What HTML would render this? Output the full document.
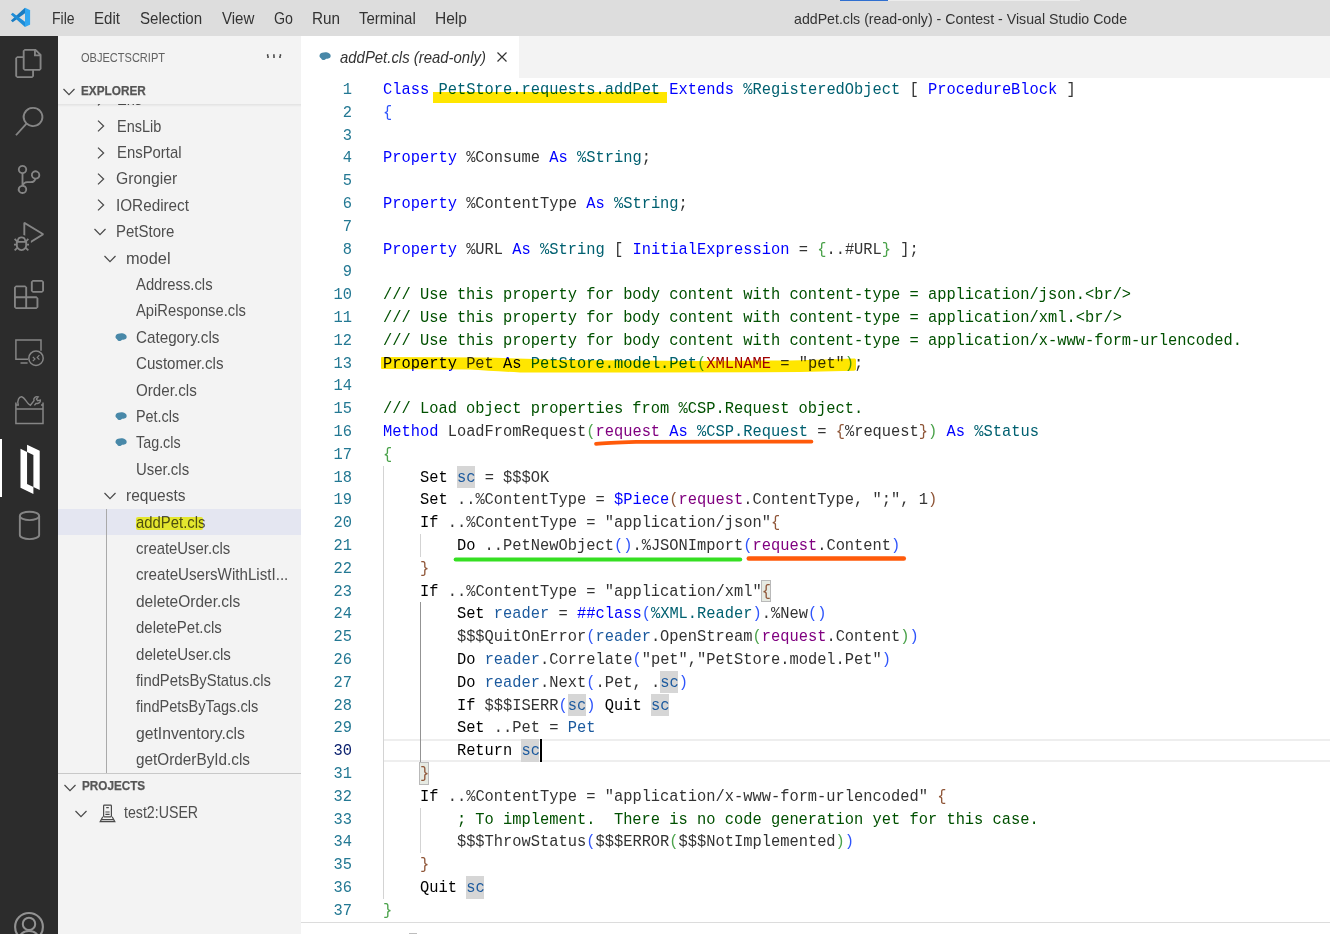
<!DOCTYPE html><html><head><meta charset="utf-8"><title>addPet.cls (read-only) - Contest - Visual Studio Code</title><style>
*{box-sizing:border-box;margin:0;padding:0}
html,body{width:1330px;height:934px;overflow:hidden;background:#fff}
body{position:relative;font-family:"Liberation Sans",sans-serif;color:#333}
.abs{position:absolute}
#title{left:0;top:0;width:1330px;height:36px;background:#dddddd}
#title .m{position:absolute;top:0;height:36px;line-height:36px;font-size:15px;color:#333;white-space:nowrap}
#wt{position:absolute;top:0;height:36px;line-height:37px;font-size:14.2px;color:#333;white-space:nowrap;left:793px}
#act{left:0;top:36px;width:58px;height:898px;background:#2c2c2c}
#side{left:58px;top:36px;width:243px;height:898px;background:#f3f3f3;overflow:hidden}
#ed{left:301px;top:36px;width:1029px;height:898px;background:#fff;overflow:hidden}
#tabs{left:0;top:0;width:1029px;height:42px;background:#f3f3f3}
#tab{left:0;top:0;width:218px;height:42px;background:#fff}
.row{position:absolute;left:0;width:243px;height:26.4px;line-height:26.4px;font-size:15px;color:#616161;white-space:nowrap}
.row span{position:absolute;top:0}
.hdr{position:absolute;left:0;width:243px;height:26.4px;line-height:26.4px;font-size:13.2px;font-weight:bold;color:#616161}
.ln{position:absolute;left:0;width:51px;text-align:right;height:22.8px;line-height:22.8px;color:#237893;transform:scaleY(1.09);transform-origin:0 5.4px}
.cl{position:absolute;left:82px;height:22.8px;line-height:22.8px;white-space:pre;color:#333;transform:scaleY(1.09);transform-origin:0 5.4px}
#code{font-family:"Liberation Mono",monospace;font-size:15.4px}
.k{color:#0000ff}.t{color:#006070}.d{color:#333}.c{color:#005000}.p{color:#800080}
.v{color:#1c5a9e}.b1{color:#2f55fb}.b2{color:#4aa24a}.b3{color:#8f5638}.r{color:#a00000}.bk{color:#000}
.hl{position:absolute;background:#d6d6d6}
svg{position:absolute;overflow:visible}
</style></head><body>
<div id="title" class="abs">
<svg style="left:0;top:0" width="40" height="36" viewBox="0 0 40 36"><path d="M10.9 20.6 L25 7.8 L25 13.3 L12.7 22.3 Z" fill="#1a7cc2"/><path d="M10.9 14.4 L12.7 12.7 L25 21.7 L25 27.1 Z" fill="#1e8dd8"/><path d="M25 7.8 L29.8 10.1 L30.1 10.6 L30.1 24.4 L29.8 24.8 L25 27.1 Z" fill="#30a6f1"/></svg>
<div id="m_File" class="abs" style="left:51.76px;top:-0.30px;height:36.00px;line-height:36.00px;font-size:16.20px;transform:scaleX(0.8663);transform-origin:0 0;white-space:nowrap;color:#333;">File</div>
<div id="m_Edit" class="abs" style="left:94.19px;top:-0.30px;height:36.00px;line-height:36.00px;font-size:16.20px;transform:scaleX(0.9314);transform-origin:0 0;white-space:nowrap;color:#333;">Edit</div>
<div id="m_Selection" class="abs" style="left:140.19px;top:-0.30px;height:36.00px;line-height:36.00px;font-size:16.20px;transform:scaleX(0.9334);transform-origin:0 0;white-space:nowrap;color:#333;">Selection</div>
<div id="m_View" class="abs" style="left:222.16px;top:-0.30px;height:36.00px;line-height:36.00px;font-size:16.20px;transform:scaleX(0.9306);transform-origin:0 0;white-space:nowrap;color:#333;">View</div>
<div id="m_Go" class="abs" style="left:274.16px;top:-0.30px;height:36.00px;line-height:36.00px;font-size:16.20px;transform:scaleX(0.8792);transform-origin:0 0;white-space:nowrap;color:#333;">Go</div>
<div id="m_Run" class="abs" style="left:312.32px;top:-0.30px;height:36.00px;line-height:36.00px;font-size:16.20px;transform:scaleX(0.9448);transform-origin:0 0;white-space:nowrap;color:#333;">Run</div>
<div id="m_Terminal" class="abs" style="left:359.37px;top:-0.30px;height:36.00px;line-height:36.00px;font-size:16.20px;transform:scaleX(0.9279);transform-origin:0 0;white-space:nowrap;color:#333;">Terminal</div>
<div id="m_Help" class="abs" style="left:435.37px;top:-0.30px;height:36.00px;line-height:36.00px;font-size:16.20px;transform:scaleX(0.9604);transform-origin:0 0;white-space:nowrap;color:#333;">Help</div>
<div id="wt" class="abs" style="left:793.69px;top:0.50px;height:36.00px;line-height:36.00px;font-size:15.00px;transform:scaleX(0.9450);transform-origin:0 0;white-space:nowrap;color:#333;">addPet.cls (read-only) - Contest - Visual Studio Code</div>
<div class="abs" style="left:840px;top:0;width:48px;height:1px;background:#2f6fd0"></div>
<div class="abs" style="left:888px;top:0;width:192px;height:1px;background:#ececec"></div>
</div>
<div id="act" class="abs">
<svg style="left:14.0px;top:13.3px" width="30" height="29" viewBox="0 0 24 24" preserveAspectRatio="none" fill="#858585"><path d="M17.5 0h-9L7 1.5V6H2.5L1 7.5v15.07L2.5 24h12.07L16 22.57V18h4.7l1.3-1.43V4.5L17.5 0zm0 2.12l2.38 2.38H17.5V2.12zm-3 20.38h-12v-15H7v9.07L8.5 18h6v4.5zm6-6h-12v-15H16V6h4.5v10.5z"/></svg>
<svg style="left:14.0px;top:70.9px" width="30" height="29" viewBox="0 0 24 24" preserveAspectRatio="none" fill="#858585"><path d="M15.25 0a8.25 8.25 0 0 0-6.18 13.72L1 22.88l1.12 1 8.05-9.12A8.251 8.251 0 1 0 15.25.01V0zm0 15a6.75 6.75 0 1 1 0-13.5 6.75 6.75 0 0 1 0 13.5z"/></svg>
<svg style="left:14.0px;top:128.5px" width="30" height="29" viewBox="0 0 24 24" preserveAspectRatio="none" fill="#858585"><path d="M21.007 8.222A3.738 3.738 0 0 0 15.045 5.2a3.737 3.737 0 0 0 1.156 6.583 2.988 2.988 0 0 1-2.668 1.67h-2.99a4.456 4.456 0 0 0-2.989 1.165V7.4a3.737 3.737 0 1 0-1.494 0v9.117a3.776 3.776 0 1 0 1.816.099 2.99 2.99 0 0 1 2.668-1.667h2.99a4.484 4.484 0 0 0 4.223-3.039 3.736 3.736 0 0 0 3.25-3.687zM4.565 3.738a2.242 2.242 0 1 1 4.484 0 2.242 2.242 0 0 1-4.484 0zm4.484 16.441a2.242 2.242 0 1 1-4.484 0 2.242 2.242 0 0 1 4.484 0zm8.221-9.715a2.242 2.242 0 1 1 0-4.485 2.242 2.242 0 0 1 0 4.485z"/></svg>
<svg style="left:14.0px;top:186.1px" width="30" height="29" viewBox="0 0 24 24" preserveAspectRatio="none" fill="#858585"><path d="M10.94 13.5l-1.32 1.32a3.73 3.73 0 0 0-7.24 0L1.06 13.5 0 14.56l1.72 1.72-.22.22V18H0v1.5h1.5v.08c.077.489.214.966.41 1.42L0 22.94 1.06 24l1.65-1.65A4.308 4.308 0 0 0 6 24a4.31 4.31 0 0 0 3.29-1.65L10.94 24 12 22.94 10.09 21c.198-.464.336-.951.41-1.45v-.1H12V18h-1.5v-1.5l-.22-.22L12 14.56l-1.06-1.06zM6 13.5a2.25 2.25 0 0 1 2.25 2.25h-4.5A2.25 2.25 0 0 1 6 13.5zm3 6a3.33 3.33 0 0 1-3 3 3.33 3.33 0 0 1-3-3v-2.25h6v2.25zm14.76-9.9v1.26L13.5 17.37V15.6l8.5-5.37L9 2v9.46a5.07 5.07 0 0 0-1.5-.72V.63L8.64 0l15.12 9.6z"/></svg>
<svg style="left:14.0px;top:243.7px" width="30" height="29" viewBox="0 0 24 24" preserveAspectRatio="none" fill="#858585"><path d="M13.5 1.5L15 0h7.5L24 1.5V9l-1.5 1.5H15L13.5 9V1.5zm1.5 0V9h7.5V1.5H15zM0 15V6l1.5-1.5H9L10.5 6v7.5H18l1.5 1.5v7.5L18 24H1.5L0 22.5V15zm9-1.5V6H1.5v7.5H9zM9 15H1.5v7.5H9V15zm1.5 7.5H18V15h-7.5v7.5z"/></svg>
<svg style="left:0;top:0" width="58" height="898" viewBox="0 36 58 898"><g fill="none" stroke="#858585" stroke-width="1.5"><path d="M28 359.2 H15.9 V340 H41 V350.8"/><path d="M20.5 363 H27.6"/><circle cx="36" cy="358.2" r="7.2"/><path d="M32.8 356.8 L35 359 L32.8 361.2 M39.4 355.2 L37.2 357.4 L39.4 359.6" stroke-width="1.2"/><path d="M15.9 402.5 V423.4 H43 V402.5 M15.9 408.9 H43 M16.5 405 H19 M41 405 H42.5"/><path d="M18.2 404.6 C17 400.5 19 396.6 21.6 396.8 C24.2 397.4 26 401.2 28.6 404 L30.4 405.2 L34 400.6 C33 398 35.6 396 38.2 396.9 L36.4 399.1 L37.7 400.7 L40.4 400.1 C40.7 402.6 38.1 404.1 36.1 403.3 L34.4 405.4" stroke-width="1.4"/></g></svg>
<svg style="left:0;top:0" width="58" height="898" viewBox="0 36 58 898"><g fill="#fff"><path d="M20.5 448.7 L27.05 451.9 L27.05 483.9 L33.4 487 L33.4 494.1 L20.5 487.7 Z"/><path d="M27.05 444.8 L39.7 450.7 L39.7 490.1 L33.4 487 L33.4 455 L27.05 451.9 Z"/></g></svg>
<svg style="left:0;top:0" width="58" height="898" viewBox="0 36 58 898"><g fill="none" stroke="#858585" stroke-width="1.9"><ellipse cx="29.5" cy="515.9" rx="9.65" ry="4.2"/><path d="M19.85 515.9 V534.9 A9.65 4.2 0 0 0 39.15 534.9 V515.9"/></g></svg>
<svg style="left:0;top:0" width="58" height="898" viewBox="0 36 58 898"><g fill="none" stroke="#929292" stroke-width="2.1"><circle cx="29" cy="926.9" r="13.9"/><circle cx="29" cy="923.9" r="6.2" stroke-width="2"/><path d="M19.4 937.5 C21 932.3 25 931.1 29 931.1 C33 931.1 37 932.3 38.6 937.5" stroke-width="2"/></g></svg>
<div class="abs" style="left:0;top:403.2px;width:2.4px;height:57.6px;background:#fff"></div>
</div>
<div id="side" class="abs">
<div id="sb_title" class="abs" style="left:23.37px;top:0.80px;height:42.00px;line-height:42.00px;font-size:13.00px;transform:scaleX(0.8489);transform-origin:0 0;white-space:nowrap;color:#616161;">OBJECTSCRIPT</div>
<div class="abs" style="left:207px;top:11px;font-size:16px;letter-spacing:1px;color:#424242;line-height:16px">···</div>
<div class="abs" style="left:0;top:68.4px;width:243px;height:668.6px;overflow:hidden">
<svg style="left:39.2px;top:-10.6px" width="8" height="12" viewBox="0 0 8 12"><path d="M1 0.6 L6.6 6 L1 11.4" fill="none" stroke="#4a4a4a" stroke-width="1.25"/></svg>
<div id="r0" class="abs" style="left:58.80px;top:-18.90px;height:26.40px;line-height:26.40px;font-size:16.20px;transform:scaleX(0.9000);transform-origin:0 0;white-space:nowrap;color:#4e4e4e;">Ens</div>
<svg style="left:39.2px;top:15.8px" width="8" height="12" viewBox="0 0 8 12"><path d="M1 0.6 L6.6 6 L1 11.4" fill="none" stroke="#4a4a4a" stroke-width="1.25"/></svg>
<div id="r1" class="abs" style="left:58.58px;top:8.30px;height:26.40px;line-height:26.40px;font-size:16.20px;transform:scaleX(0.8937);transform-origin:0 0;white-space:nowrap;color:#4e4e4e;">EnsLib</div>
<svg style="left:39.2px;top:42.2px" width="8" height="12" viewBox="0 0 8 12"><path d="M1 0.6 L6.6 6 L1 11.4" fill="none" stroke="#4a4a4a" stroke-width="1.25"/></svg>
<div id="r2" class="abs" style="left:58.55px;top:34.70px;height:26.40px;line-height:26.40px;font-size:16.20px;transform:scaleX(0.9196);transform-origin:0 0;white-space:nowrap;color:#4e4e4e;">EnsPortal</div>
<svg style="left:39.2px;top:68.6px" width="8" height="12" viewBox="0 0 8 12"><path d="M1 0.6 L6.6 6 L1 11.4" fill="none" stroke="#4a4a4a" stroke-width="1.25"/></svg>
<div id="r3" class="abs" style="left:58.44px;top:61.10px;height:26.40px;line-height:26.40px;font-size:16.20px;transform:scaleX(0.9723);transform-origin:0 0;white-space:nowrap;color:#4e4e4e;">Grongier</div>
<svg style="left:39.2px;top:95.0px" width="8" height="12" viewBox="0 0 8 12"><path d="M1 0.6 L6.6 6 L1 11.4" fill="none" stroke="#4a4a4a" stroke-width="1.25"/></svg>
<div id="r4" class="abs" style="left:57.95px;top:87.50px;height:26.40px;line-height:26.40px;font-size:16.20px;transform:scaleX(0.9434);transform-origin:0 0;white-space:nowrap;color:#4e4e4e;">IORedirect</div>
<svg style="left:36.2px;top:124.0px" width="12" height="8" viewBox="0 0 12 8"><path d="M0.5 1 L6 6.6 L11.5 1" fill="none" stroke="#4a4a4a" stroke-width="1.25"/></svg>
<div id="r5" class="abs" style="left:57.95px;top:113.90px;height:26.40px;line-height:26.40px;font-size:16.20px;transform:scaleX(0.9256);transform-origin:0 0;white-space:nowrap;color:#4e4e4e;">PetStore</div>
<svg style="left:45.5px;top:150.4px" width="12" height="8" viewBox="0 0 12 8"><path d="M0.5 1 L6 6.6 L11.5 1" fill="none" stroke="#4a4a4a" stroke-width="1.25"/></svg>
<div id="r6" class="abs" style="left:68.16px;top:140.30px;height:26.40px;line-height:26.40px;font-size:16.20px;transform:scaleX(1.0104);transform-origin:0 0;white-space:nowrap;color:#4e4e4e;">model</div>
<div id="r7" class="abs" style="left:78.46px;top:166.70px;height:26.40px;line-height:26.40px;font-size:16.20px;transform:scaleX(0.9150);transform-origin:0 0;white-space:nowrap;color:#4e4e4e;">Address.cls</div>
<div id="r8" class="abs" style="left:78.46px;top:193.10px;height:26.40px;line-height:26.40px;font-size:16.20px;transform:scaleX(0.9105);transform-origin:0 0;white-space:nowrap;color:#4e4e4e;">ApiResponse.cls</div>
<svg style="left:57.0px;top:228.2px" width="12.2" height="9" viewBox="0 0 13 10"><path d="M0.3 4 C0.6 1.4 3 0.2 5.5 0.5 C8.5 0 12.7 1.2 12.7 4.4 C12.7 7 9.5 7.6 7.6 7.6 C6 9.6 2.6 9.4 2 7 C0.8 6.4 0.1 5.4 0.3 4 Z" fill="#4888a8"/></svg>
<div id="r9" class="abs" style="left:77.96px;top:219.50px;height:26.40px;line-height:26.40px;font-size:16.20px;transform:scaleX(0.9399);transform-origin:0 0;white-space:nowrap;color:#4e4e4e;">Category.cls</div>
<div id="r10" class="abs" style="left:77.96px;top:245.90px;height:26.40px;line-height:26.40px;font-size:16.20px;transform:scaleX(0.9348);transform-origin:0 0;white-space:nowrap;color:#4e4e4e;">Customer.cls</div>
<div id="r11" class="abs" style="left:77.96px;top:272.30px;height:26.40px;line-height:26.40px;font-size:16.20px;transform:scaleX(0.9375);transform-origin:0 0;white-space:nowrap;color:#4e4e4e;">Order.cls</div>
<svg style="left:57.0px;top:307.4px" width="12.2" height="9" viewBox="0 0 13 10"><path d="M0.3 4 C0.6 1.4 3 0.2 5.5 0.5 C8.5 0 12.7 1.2 12.7 4.4 C12.7 7 9.5 7.6 7.6 7.6 C6 9.6 2.6 9.4 2 7 C0.8 6.4 0.1 5.4 0.3 4 Z" fill="#4888a8"/></svg>
<div id="r12" class="abs" style="left:78.15px;top:298.70px;height:26.40px;line-height:26.40px;font-size:16.20px;transform:scaleX(0.8898);transform-origin:0 0;white-space:nowrap;color:#4e4e4e;">Pet.cls</div>
<svg style="left:57.0px;top:333.8px" width="12.2" height="9" viewBox="0 0 13 10"><path d="M0.3 4 C0.6 1.4 3 0.2 5.5 0.5 C8.5 0 12.7 1.2 12.7 4.4 C12.7 7 9.5 7.6 7.6 7.6 C6 9.6 2.6 9.4 2 7 C0.8 6.4 0.1 5.4 0.3 4 Z" fill="#4888a8"/></svg>
<div id="r13" class="abs" style="left:77.98px;top:325.10px;height:26.40px;line-height:26.40px;font-size:16.20px;transform:scaleX(0.8861);transform-origin:0 0;white-space:nowrap;color:#4e4e4e;">Tag.cls</div>
<div id="r14" class="abs" style="left:78.15px;top:351.50px;height:26.40px;line-height:26.40px;font-size:16.20px;transform:scaleX(0.9223);transform-origin:0 0;white-space:nowrap;color:#4e4e4e;">User.cls</div>
<svg style="left:45.5px;top:388.0px" width="12" height="8" viewBox="0 0 12 8"><path d="M0.5 1 L6 6.6 L11.5 1" fill="none" stroke="#4a4a4a" stroke-width="1.25"/></svg>
<div id="r15" class="abs" style="left:68.12px;top:377.90px;height:26.40px;line-height:26.40px;font-size:16.20px;transform:scaleX(0.9574);transform-origin:0 0;white-space:nowrap;color:#4e4e4e;">requests</div>
<div class="abs" style="left:0;top:404.4px;width:243px;height:26.4px;background:#e4e6f1"></div>
<div id="r16" class="abs" style="left:77.96px;top:404.30px;height:26.40px;line-height:26.40px;font-size:16.20px;transform:scaleX(0.9190);transform-origin:0 0;white-space:nowrap;color:#4e4e4e;">addPet.cls</div>
<div id="r17" class="abs" style="left:77.96px;top:430.70px;height:26.40px;line-height:26.40px;font-size:16.20px;transform:scaleX(0.9193);transform-origin:0 0;white-space:nowrap;color:#4e4e4e;">createUser.cls</div>
<div id="r18" class="abs" style="left:77.95px;top:457.10px;height:26.40px;line-height:26.40px;font-size:16.20px;transform:scaleX(0.9354);transform-origin:0 0;white-space:nowrap;color:#4e4e4e;">createUsersWithListI...</div>
<div id="r19" class="abs" style="left:77.96px;top:483.50px;height:26.40px;line-height:26.40px;font-size:16.20px;transform:scaleX(0.9573);transform-origin:0 0;white-space:nowrap;color:#4e4e4e;">deleteOrder.cls</div>
<div id="r20" class="abs" style="left:77.96px;top:509.90px;height:26.40px;line-height:26.40px;font-size:16.20px;transform:scaleX(0.9254);transform-origin:0 0;white-space:nowrap;color:#4e4e4e;">deletePet.cls</div>
<div id="r21" class="abs" style="left:77.96px;top:536.30px;height:26.40px;line-height:26.40px;font-size:16.20px;transform:scaleX(0.9335);transform-origin:0 0;white-space:nowrap;color:#4e4e4e;">deleteUser.cls</div>
<div id="r22" class="abs" style="left:77.94px;top:562.70px;height:26.40px;line-height:26.40px;font-size:16.20px;transform:scaleX(0.9144);transform-origin:0 0;white-space:nowrap;color:#4e4e4e;">findPetsByStatus.cls</div>
<div id="r23" class="abs" style="left:77.96px;top:589.10px;height:26.40px;line-height:26.40px;font-size:16.20px;transform:scaleX(0.8997);transform-origin:0 0;white-space:nowrap;color:#4e4e4e;">findPetsByTags.cls</div>
<div id="r24" class="abs" style="left:77.96px;top:615.50px;height:26.40px;line-height:26.40px;font-size:16.20px;transform:scaleX(0.9716);transform-origin:0 0;white-space:nowrap;color:#4e4e4e;">getInventory.cls</div>
<div id="r25" class="abs" style="left:77.96px;top:641.90px;height:26.40px;line-height:26.40px;font-size:16.20px;transform:scaleX(0.9458);transform-origin:0 0;white-space:nowrap;color:#4e4e4e;">getOrderById.cls</div>
<div class="abs" style="left:48px;top:404.4px;width:1px;height:265px;background:#a9a9a9"></div>
<div class="abs" style="left:78.4px;top:412.4px;width:67px;height:13.4px;background:#ffff30;mix-blend-mode:multiply;border-radius:2px"></div>
</div>
<div class="abs" style="left:0;top:42px;width:243px;height:26.2px;background:#f3f3f3"></div>
<div class="abs" style="left:0;top:67.8px;width:243px;height:3.4px;background:linear-gradient(rgba(0,0,0,0.075),rgba(0,0,0,0))"></div>
<svg style="left:5.3px;top:52.2px" width="12" height="8" viewBox="0 0 12 8"><path d="M0.5 1 L6 6.6 L11.5 1" fill="none" stroke="#4a4a4a" stroke-width="1.25"/></svg>
<div id="h_exp" class="abs" style="left:23.36px;top:42.20px;height:26.40px;line-height:26.40px;font-size:12.80px;transform:scaleX(0.9203);transform-origin:0 0;white-space:nowrap;font-weight:bold;-webkit-text-stroke:0.25px;color:#555;">EXPLORER</div>
<div class="abs" style="left:208.7px;top:19.6px;width:2px;height:2px;border-radius:1px;background:#3c3c3c"></div>
<div class="abs" style="left:214.5px;top:19.6px;width:2px;height:2px;border-radius:1px;background:#3c3c3c"></div>
<div class="abs" style="left:220.5px;top:19.6px;width:2px;height:2px;border-radius:1px;background:#3c3c3c"></div>
<div class="abs" style="left:0;top:737px;width:243px;height:1px;background:#c8c8c8"></div>
<svg style="left:5.5px;top:747.6px" width="12" height="8" viewBox="0 0 12 8"><path d="M0.5 1 L6 6.6 L11.5 1" fill="none" stroke="#4a4a4a" stroke-width="1.25"/></svg>
<div id="h_prj" class="abs" style="left:23.78px;top:737.40px;height:26.40px;line-height:26.40px;font-size:12.80px;transform:scaleX(0.9161);transform-origin:0 0;white-space:nowrap;font-weight:bold;-webkit-text-stroke:0.25px;color:#555;">PROJECTS</div>
<svg style="left:17.2px;top:774.0px" width="12" height="8" viewBox="0 0 12 8"><path d="M0.5 1 L6 6.6 L11.5 1" fill="none" stroke="#4a4a4a" stroke-width="1.25"/></svg>
<svg style="left:40.5px;top:767.5px" width="18" height="19" viewBox="0 0 18 19"><g fill="none" stroke="#4a4a4a" stroke-width="1.2"><rect x="4.6" y="1.2" width="7.8" height="11.6" rx="0.8"/><path d="M3.8 12.8 L1.2 17.6 L15.8 17.6 L13.2 12.8"/><path d="M6.4 8 H10.6 M6.4 10.4 H10.6 M7.2 3.6 H9.8 M2.2 15.6 H14.8"/></g></svg>
<div id="r_prj" class="abs" style="left:65.95px;top:763.00px;height:26.40px;line-height:26.40px;font-size:16.20px;transform:scaleX(0.8761);transform-origin:0 0;white-space:nowrap;color:#4e4e4e;">test2:USER</div>
</div>
<div id="ed" class="abs">
<div id="tabs" class="abs"><div id="tab" class="abs">
<svg style="left:18.3px;top:16.2px" width="12.2" height="9" viewBox="0 0 13 10"><path d="M0.3 4 C0.6 1.4 3 0.2 5.5 0.5 C8.5 0 12.7 1.2 12.7 4.4 C12.7 7 9.5 7.6 7.6 7.6 C6 9.6 2.6 9.4 2 7 C0.8 6.4 0.1 5.4 0.3 4 Z" fill="#4888a8"/></svg>
<div id="tabt" class="abs" style="left:39.19px;top:-0.10px;height:42.00px;line-height:42.00px;font-size:16.20px;transform:scaleX(0.9213);transform-origin:0 0;white-space:nowrap;font-style:italic;color:#333;">addPet.cls (read-only)</div>
<svg style="left:196px;top:15.6px" width="10" height="10" viewBox="0 0 10 10"><path d="M0.5 0.5 L9.5 9.5 M9.5 0.5 L0.5 9.5" stroke="#333" stroke-width="1.2" fill="none"/></svg>
</div></div>
<div id="code" class="abs" style="left:0;top:0;width:1029px;height:898px">
<div class="abs" style="left:82px;top:703.2px;width:947px;height:22.8px;border-top:2px solid #eee;border-bottom:2px solid #eee"></div>
<div class="hl" style="left:155.6px;top:429.7px;width:18.2px;height:22.6px"></div>
<div class="hl" style="left:358.9px;top:634.9px;width:18.2px;height:22.6px"></div>
<div class="hl" style="left:266.5px;top:657.7px;width:18.2px;height:22.6px"></div>
<div class="hl" style="left:349.7px;top:657.7px;width:18.2px;height:22.6px"></div>
<div class="hl" style="left:220.3px;top:703.3px;width:18.2px;height:22.6px"></div>
<div class="hl" style="left:164.9px;top:840.1px;width:18.2px;height:22.6px"></div>
<div class="abs" style="left:460.2px;top:543.8px;width:10.1px;height:22.5px;background:#e6eae2;border:1px solid #b9b9b9"></div>
<div class="abs" style="left:118.4px;top:726.2px;width:10.1px;height:22.5px;background:#e6eae2;border:1px solid #b9b9b9"></div>
<div class="abs" style="left:82px;top:429.6px;width:1px;height:433.2px;background:#d3d3d3"></div>
<div class="abs" style="left:119px;top:498.0px;width:1px;height:22.8px;background:#d3d3d3"></div>
<div class="abs" style="left:119px;top:566.4px;width:1px;height:159.6px;background:#939393"></div>
<div class="abs" style="left:119px;top:771.6px;width:1px;height:45.6px;background:#d3d3d3"></div>
<div class="ln" style="top:42.0px">1</div>
<div class="cl" style="top:42.0px"><span class="k">Class</span> <span class="t">PetStore.requests.addPet</span> <span class="k">Extends</span> <span class="t">%RegisteredObject</span><span class="d"> [ </span><span class="k">ProcedureBlock</span><span class="d"> ]</span></div>
<div class="ln" style="top:64.8px">2</div>
<div class="cl" style="top:64.8px"><span class="b1">{</span></div>
<div class="ln" style="top:87.6px">3</div>
<div class="ln" style="top:110.4px">4</div>
<div class="cl" style="top:110.4px"><span class="k">Property</span><span class="d"> %Consume </span><span class="k">As</span> <span class="t">%String</span><span class="d">;</span></div>
<div class="ln" style="top:133.2px">5</div>
<div class="ln" style="top:156.0px">6</div>
<div class="cl" style="top:156.0px"><span class="k">Property</span><span class="d"> %ContentType </span><span class="k">As</span> <span class="t">%String</span><span class="d">;</span></div>
<div class="ln" style="top:178.8px">7</div>
<div class="ln" style="top:201.6px">8</div>
<div class="cl" style="top:201.6px"><span class="k">Property</span><span class="d"> %URL </span><span class="k">As</span> <span class="t">%String</span><span class="d"> [ </span><span class="k">InitialExpression</span><span class="d"> = </span><span class="b2">{</span><span class="d">..#URL</span><span class="b2">}</span><span class="d"> ];</span></div>
<div class="ln" style="top:224.4px">9</div>
<div class="ln" style="top:247.2px">10</div>
<div class="cl" style="top:247.2px"><span class="c">/// Use this property for body content with content-type = application/json.&lt;br/&gt;</span></div>
<div class="ln" style="top:270.0px">11</div>
<div class="cl" style="top:270.0px"><span class="c">/// Use this property for body content with content-type = application/xml.&lt;br/&gt;</span></div>
<div class="ln" style="top:292.8px">12</div>
<div class="cl" style="top:292.8px"><span class="c">/// Use this property for body content with content-type = application/x-www-form-urlencoded.</span></div>
<div class="ln" style="top:315.6px">13</div>
<div class="cl" style="top:315.6px"><span class="k">Property</span><span class="d"> Pet </span><span class="k">As</span> <span class="t">PetStore.model.Pet</span><span class="b2">(</span><span class="r">XMLNAME</span><span class="d"> = &quot;pet&quot;</span><span class="b2">)</span><span class="d">;</span></div>
<div class="ln" style="top:338.4px">14</div>
<div class="ln" style="top:361.2px">15</div>
<div class="cl" style="top:361.2px"><span class="c">/// Load object properties from %CSP.Request object.</span></div>
<div class="ln" style="top:384.0px">16</div>
<div class="cl" style="top:384.0px"><span class="k">Method</span><span class="d"> LoadFromRequest</span><span class="b2">(</span><span class="p">request</span> <span class="k">As</span> <span class="t">%CSP.Request</span><span class="d"> = </span><span class="b3">{</span><span class="d">%request</span><span class="b3">}</span><span class="b2">)</span> <span class="k">As</span> <span class="t">%Status</span></div>
<div class="ln" style="top:406.8px">17</div>
<div class="cl" style="top:406.8px"><span class="b2">{</span></div>
<div class="ln" style="top:429.6px">18</div>
<div class="cl" style="top:429.6px">    <span class="bk">Set</span> <span class="v">sc</span><span class="d"> = $$$OK</span></div>
<div class="ln" style="top:452.4px">19</div>
<div class="cl" style="top:452.4px">    <span class="bk">Set</span><span class="d"> ..%ContentType = </span><span class="k">$Piece</span><span class="b3">(</span><span class="p">request</span><span class="d">.ContentType, &quot;;&quot;, 1</span><span class="b3">)</span></div>
<div class="ln" style="top:475.2px">20</div>
<div class="cl" style="top:475.2px">    <span class="bk">If</span><span class="d"> ..%ContentType = &quot;application/json&quot;</span><span class="b3">{</span></div>
<div class="ln" style="top:498.0px">21</div>
<div class="cl" style="top:498.0px">        <span class="bk">Do</span><span class="d"> ..PetNewObject</span><span class="b1">()</span><span class="d">.%JSONImport</span><span class="b1">(</span><span class="p">request</span><span class="d">.Content</span><span class="b1">)</span></div>
<div class="ln" style="top:520.8px">22</div>
<div class="cl" style="top:520.8px">    <span class="b3">}</span></div>
<div class="ln" style="top:543.6px">23</div>
<div class="cl" style="top:543.6px">    <span class="bk">If</span><span class="d"> ..%ContentType = &quot;application/xml&quot;</span><span class="b3">{</span></div>
<div class="ln" style="top:566.4px">24</div>
<div class="cl" style="top:566.4px">        <span class="bk">Set</span> <span class="v">reader</span><span class="d"> = </span><span class="k">##class</span><span class="b1">(</span><span class="t">%XML.Reader</span><span class="b1">)</span><span class="d">.%New</span><span class="b1">()</span></div>
<div class="ln" style="top:589.2px">25</div>
<div class="cl" style="top:589.2px">        <span class="d">$$$QuitOnError</span><span class="b1">(</span><span class="v">reader</span><span class="d">.OpenStream</span><span class="b2">(</span><span class="p">request</span><span class="d">.Content</span><span class="b2">)</span><span class="b1">)</span></div>
<div class="ln" style="top:612.0px">26</div>
<div class="cl" style="top:612.0px">        <span class="bk">Do</span> <span class="v">reader</span><span class="d">.Correlate</span><span class="b1">(</span><span class="d">&quot;pet&quot;,&quot;PetStore.model.Pet&quot;</span><span class="b1">)</span></div>
<div class="ln" style="top:634.8px">27</div>
<div class="cl" style="top:634.8px">        <span class="bk">Do</span> <span class="v">reader</span><span class="d">.Next</span><span class="b1">(</span><span class="d">.Pet, .</span><span class="v">sc</span><span class="b1">)</span></div>
<div class="ln" style="top:657.6px">28</div>
<div class="cl" style="top:657.6px">        <span class="bk">If</span><span class="d"> $$$ISERR</span><span class="b1">(</span><span class="v">sc</span><span class="b1">)</span> <span class="bk">Quit</span> <span class="v">sc</span></div>
<div class="ln" style="top:680.4px">29</div>
<div class="cl" style="top:680.4px">        <span class="bk">Set</span><span class="d"> ..Pet = </span><span class="v">Pet</span></div>
<div class="ln" style="top:703.2px;color:#0b216f">30</div>
<div class="cl" style="top:703.2px">        <span class="bk">Return</span> <span class="v">sc</span></div>
<div class="ln" style="top:726.0px">31</div>
<div class="cl" style="top:726.0px">    <span class="b3">}</span></div>
<div class="ln" style="top:748.8px">32</div>
<div class="cl" style="top:748.8px">    <span class="bk">If</span><span class="d"> ..%ContentType = &quot;application/x-www-form-urlencoded&quot; </span><span class="b3">{</span></div>
<div class="ln" style="top:771.6px">33</div>
<div class="cl" style="top:771.6px">        <span class="c">; To implement.  There is no code generation yet for this case.</span></div>
<div class="ln" style="top:794.4px">34</div>
<div class="cl" style="top:794.4px">        <span class="d">$$$ThrowStatus</span><span class="b1">(</span><span class="d">$$$ERROR</span><span class="b2">(</span><span class="d">$$$NotImplemented</span><span class="b2">)</span><span class="b1">)</span></div>
<div class="ln" style="top:817.2px">35</div>
<div class="cl" style="top:817.2px">    <span class="b3">}</span></div>
<div class="ln" style="top:840.0px">36</div>
<div class="cl" style="top:840.0px">    <span class="bk">Quit</span> <span class="v">sc</span></div>
<div class="ln" style="top:862.8px">37</div>
<div class="cl" style="top:862.8px"><span class="b2">}</span></div>
<div class="abs" style="left:239.1px;top:703.2px;width:2px;height:22.8px;background:#000"></div>
<div class="abs" style="left:132.4px;top:56.1px;width:234px;height:11.3px;background:#ffe600;mix-blend-mode:multiply"></div>
<svg style="left:0;top:0;mix-blend-mode:multiply" width="1029" height="898" viewBox="301 36 1029 898"><path d="M381 357.6 Q380.6 357.1 382 357.1 L480 357.5 Q520 358.3 560 360 L700 361 Q780 360.6 800 360.2 L854.6 358.5 Q856 358.5 856 360 L856 369.5 Q856 370.6 854 370.7 L800 372 L640 372.6 L520 372.4 Q490 371 470 369.5 L382 369 Q381 369 381 368 Z" fill="#ffe600"/></svg>
<svg style="left:0;top:0" width="1029" height="898" viewBox="301 36 1029 898"><g fill="none" stroke-linecap="round">
<path d="M596 443.9 Q606 443 636 441.9 L811.5 441.6" stroke="#ff5a0a" stroke-width="3.7"/>
<path d="M748.8 558.5 L903.8 558.5" stroke="#ff5a0a" stroke-width="4.5"/>
<path d="M455.7 559.5 L740.2 559.5" stroke="#35df22" stroke-width="4.1"/>
</g></svg>
</div>
<div class="abs" style="left:107.5px;top:897px;width:8px;height:1px;background:#bdbdbd"></div>
<div class="abs" style="left:0;top:886px;width:1029px;height:1px;background:#dcdcdc"></div>
</div>
</body></html>
